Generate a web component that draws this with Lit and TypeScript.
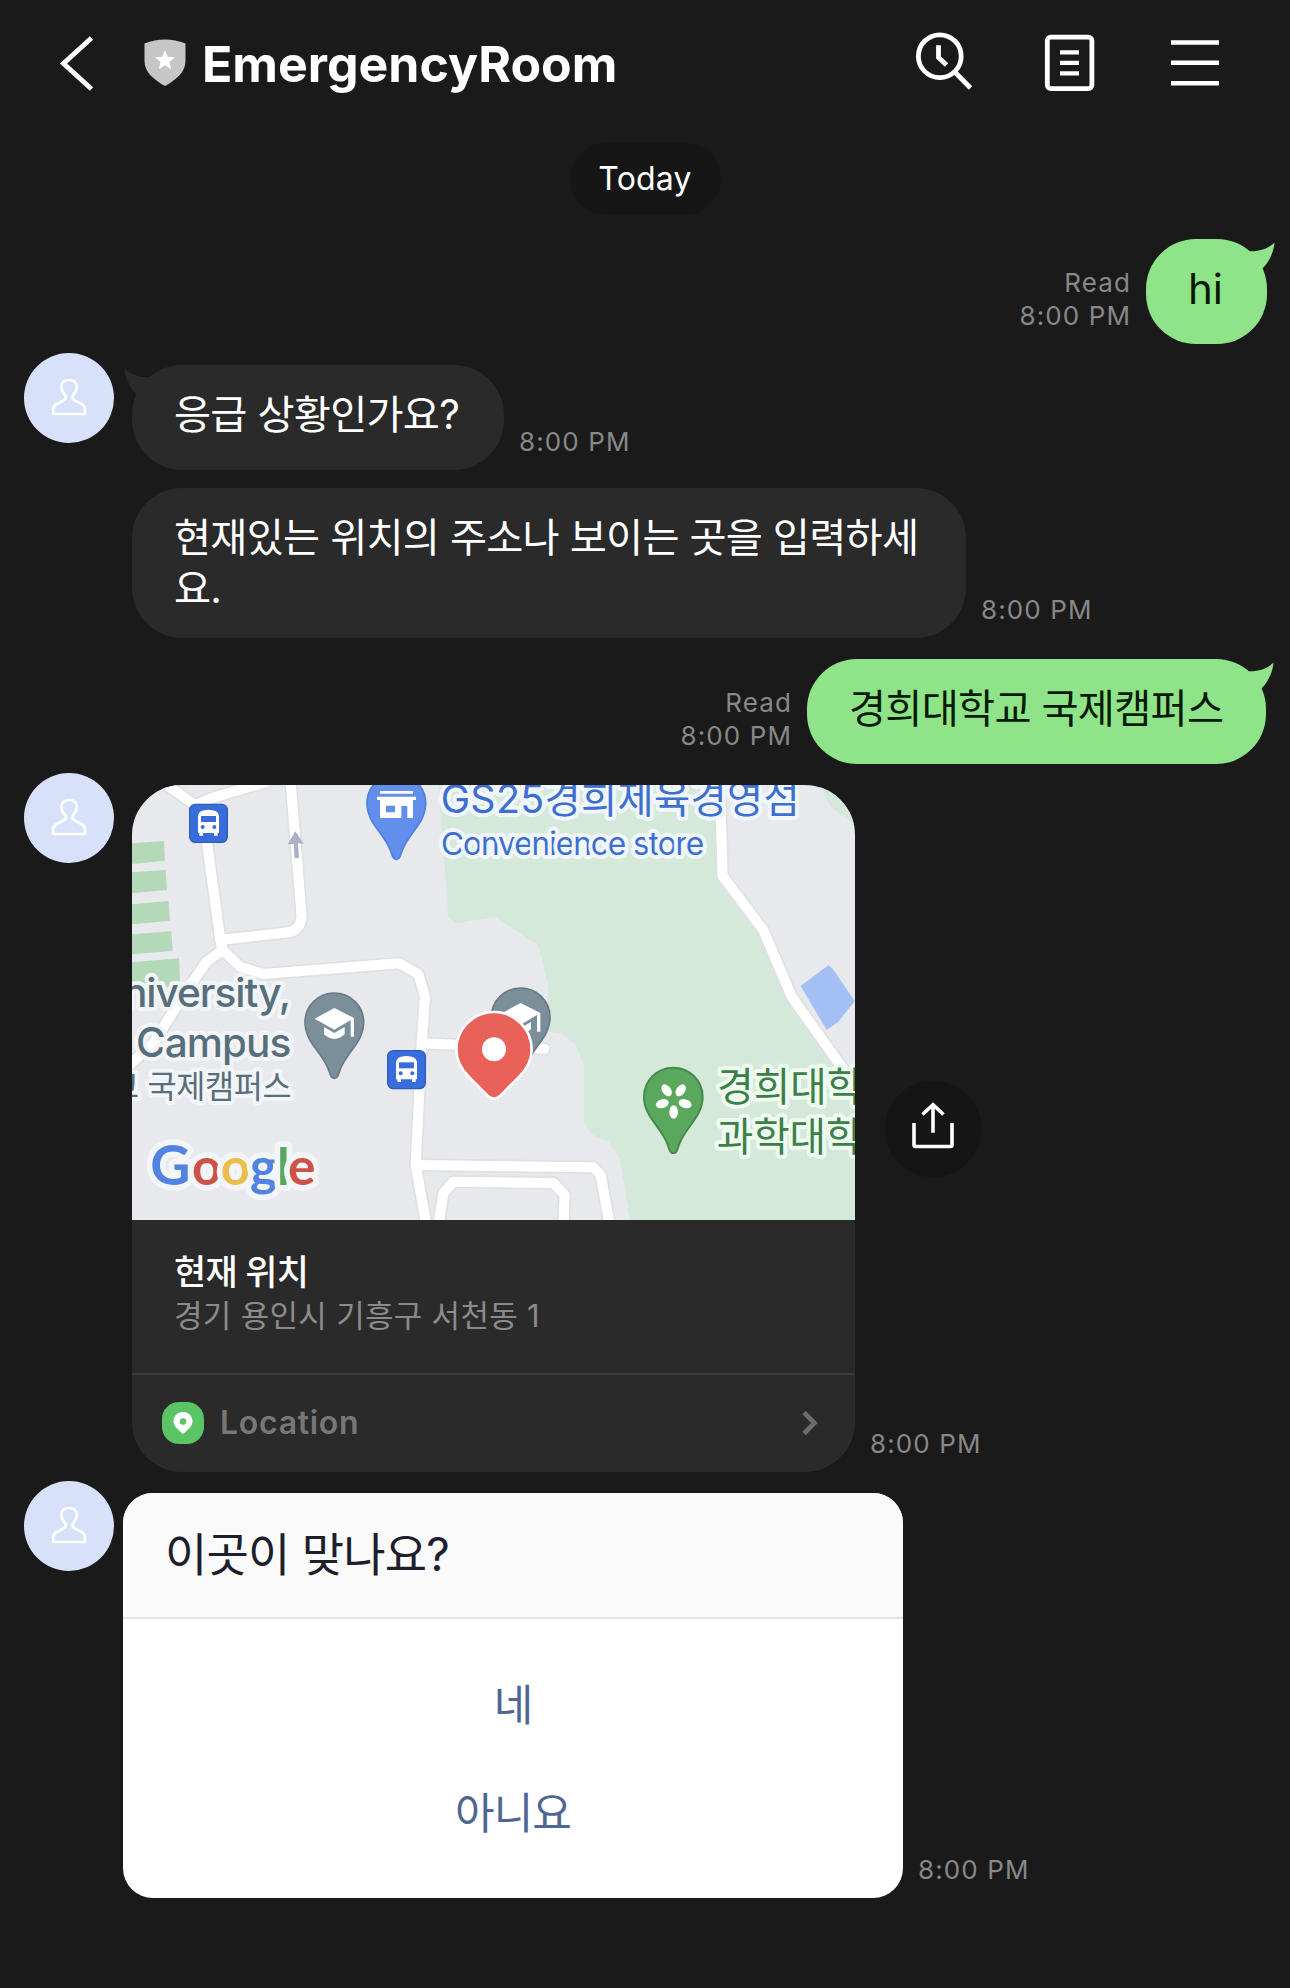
import { LitElement, html, css, svg, nothing } from "lit";
import { customElement, property } from "lit/decorators.js";

const FONT = css`Inter, "Noto Sans CJK KR", "Liberation Sans", sans-serif`;

@customElement("chat-header")
class ChatHeader extends LitElement {
  static styles = css`
    :host { display: block; }
    .bar { display: flex; align-items: center; height: 126px; padding: 0 66px 0 56px; box-sizing: border-box; }
    .back { width: 42px; height: 126px; }
    .shield { width: 44px; height: 126px; margin-left: 45px; }
    .title { margin: 0 0 0 15px; padding-top: 2px; flex: 1; font-family: ${FONT}; font-weight: 700; font-size: 50px; line-height: 124px; color: #fff; }
    .tools { width: 320px; height: 126px; }
  `;
  render() {
    return html`<header class="bar">
      <svg class="back" viewBox="56 0 42 126" fill="none" stroke="#fff" stroke-width="4.9"><path d="M91.5 38 L63.5 63.5 L91.5 89" /></svg>
      <svg class="shield" viewBox="143 0 44 126">
        <path d="M144.5 43.500 Q165 35.500 185.500 43.500 V61 C185.500 72 176 80 165 86 C154 80 144.500 72 144.500 61 Z" fill="#c6c6c6" />
        <path d="M165 50 L167.700 56.800 L175 57.300 L169.400 62 L171.200 69.200 L165 65.300 L158.800 69.200 L160.600 62 L155 57.300 L162.300 56.800 Z" fill="#fff" />
      </svg>
      <h1 class="title">EmergencyRoom</h1>
      <svg class="tools" viewBox="904 0 320 126" fill="none" stroke="#fff" stroke-width="4.800">
        <circle cx="939.800" cy="56.200" r="21.400" />
        <path d="M954.800 72 L970.500 88" />
        <path d="M938.500 45.300 V57.500 L946.500 65" />
        <rect x="1047.300" y="37.200" width="44.600" height="51.400" rx="3.500" />
        <path d="M1060 52.300 H1079 M1060 62.800 H1079 M1060 73.300 H1079" stroke-width="4.200" />
        <path d="M1171 42.400 H1219 M1171 62.800 H1219 M1171 83.200 H1219" stroke-width="4.500" />
      </svg>
    </header>`;
  }
}

@customElement("chat-avatar")
class ChatAvatar extends LitElement {
  static styles = css`
    :host { display: block; width: 90px; height: 90px; flex: none; }
    .disc { display: block; width: 90px; height: 90px; }
  `;
  render() {
    return html`<svg class="disc" viewBox="0 0 90 90">
      <circle cx="45" cy="45" r="45" fill="#d7e1fa" />
      <path d="M29.200 61 V56.500 C29.200 54 30.500 52.300 32.500 51.200 C38.500 47.800 42.300 46.800 42 43.800 C41.500 41 37.300 39.500 37.300 34 C37.300 29.500 40.500 27 45.100 27 C49.700 27 52.900 29.500 52.900 34 C52.900 39.500 48.700 41 48.200 43.800 C47.900 46.800 51.700 47.800 57.700 51.200 C59.700 52.300 61 54 61 56.500 V61 Z"
        fill="none" stroke="#fff" stroke-width="2.700" />
    </svg>`;
  }
}

@customElement("chat-bubble")
class ChatBubble extends LitElement {
  @property() side = "in";
  @property({ type: Boolean }) tail = false;
  static styles = css`
    :host { display: block; position: relative; flex: none; font-size: 40.3px; letter-spacing: -0.7px; }
    .text { box-sizing: border-box; padding: 24px 40px 30px 42px; border-radius: 50px; font-family: ${FONT};
      line-height: 51px; white-space: pre; height: 100%; }
    .in { background: #2a2a2a; color: #fff; }
    .out { background: #8fe48a; color: #061a06; }
    .tail { position: absolute; top: 2px; width: 30px; height: 32px; }
    .tail-in { left: -8px; }
    .tail-out { right: -8px; }
  `;
  render() {
    const left = this.side === "in";
    return html`<div class="text ${this.side}"><slot></slot></div>
      ${this.tail
        ? html`<svg class="tail tail-${this.side}" viewBox="0 0 30 32">
            ${left
              ? svg`<path d="M0.500 1.500 C7 8 17 11 27.500 10 L29 22 L13 28 C5 20 1.500 11 0.500 1.500 Z" fill="#2a2a2a" />`
              : svg`<path d="M29.500 1.500 C23 8 13 11 2.500 10 L1 22 L17 28 C25 20 28.500 11 29.500 1.500 Z" fill="#8fe48a" />`}
          </svg>`
        : nothing}`;
  }
}

const PIN = "M0 -88 C49 -88 88 -49 88 0 C88 57 41 86 19 138 C11 158 11 168 0 168 C-11 168 -11 158 -19 138 C-41 86 -88 57 -88 0 C-88 -49 -49 -88 0 -88 Z";

const ROADS = [
  "M130 38 L225 105 L275 84 L440 36",
  "M245 100 L301 510 L308 540",
  "M512 36 L545 440 Q540 482 505 487 L300 510",
  "M308 540 L360 590 L430 612 L838 580 L895 612 L915 680 L905 820 L887 1185 L920 1370",
  "M308 540 L260 575 L215 640 L150 740 L100 820 L20 892",
  "M905 820 L1273 836",
  "M890 1185 L1420 1192 L1442 1215 L1470 1370",
  "M955 1370 L970 1270 L1000 1235 L1300 1239 L1334 1275 L1330 1370",
  "M1799 36 L1808 318 L1930 480 L2015 680 L2250 1010",
];

@customElement("location-map")
class LocationMap extends LitElement {
  static styles = css`
    :host { display: block; }
    .map { display: block; width: 723px; height: 435px; }
    text { font-family: ${FONT}; paint-order: stroke; stroke-width: 24px; stroke-linejoin: round; }
    .shop { fill: #3c6fd0; stroke: #f0f6fb; }
    .campus { fill: #586e7a; stroke: #f2f5f8; }
    .park { fill: #3d7f49; stroke: #eefaf0; }
    .brand { font-family: Lato, sans-serif; font-weight: 700; font-size: 154px; stroke: #f3f6f9; stroke-width: 34px; }
    .cap { font-size: 166px; }
    .blue { fill: #5383e0; } .red { fill: #ce5245; } .gold { fill: #ecbd4b; } .leaf { fill: #5aa75f; }
  `;
  bus(x: number, y: number) {
    return svg`<g transform="translate(${x} ${y})">
      <rect x="2" y="2" width="113" height="114" rx="17" fill="#386ddb" stroke="#2d5cc0" stroke-width="4" />
      <path d="M27 36 Q29 18 58 18 Q88 18 90 36 V88 H86 V96 H75 V88 H42 V96 H31 V88 H27 Z" fill="#fff" />
      <rect x="36" y="37" width="45" height="18" fill="#386ddb" />
      <circle cx="41" cy="70" r="6" fill="#386ddb" /><circle cx="76" cy="70" r="6" fill="#386ddb" />
    </g>`;
  }
  school(x: number, y: number) {
    return svg`<g transform="translate(${x} ${y})">
      <path d="${PIN}" fill="#7b8f9a" stroke="#667a86" stroke-width="5" />
      <path d="M0 -43 L59 -13 V43 H49 V-7 L0 22 L-59 -11 Z" fill="#fff" />
      <path d="M-31 14 L0 32 L31 14 V36 Q15 50 0 50 Q-15 50 -31 36 Z" fill="#fff" />
    </g>`;
  }
  render() {
    return html`<svg class="map" viewBox="36 45 2169 1305">
      <rect x="36" y="45" width="2169" height="1305" fill="#e8e9ed" />
      <path d="M955 45 L975 300 L985 440 L1008 460 L1125 441 L1255 525 L1283 640 L1286 785 L1325 790 L1368 825 L1392 885 V1055 L1415 1093 L1465 1115 L1500 1168 L1530 1350 H2205 V945 L2015 680 L1930 480 L1808 318 L1799 45 Z" fill="#d4e9d9" />
      <path d="M2098 45 L2130 108 L2205 165 V45 Z" fill="#d4e9d9" />
      <path d="M36 220 L132 213 L135 272 L36 282 Z M36 307 L137 300 L141 360 L36 370 Z M36 403 L146 393 L150 452 L36 463 Z M36 493 L154 484 L158 543 L36 553 Z M36 577 L177 565 L181 650 L36 660 Z" fill="#b3d9b9" />
      <path d="M2042 648 L2125 586 L2138 596 L2204 693 L2155 755 L2120 780 Z" fill="#a3bff3" />
      <g fill="none" stroke="#dfe0e4" stroke-width="40" stroke-linejoin="round" stroke-linecap="round">${ROADS.map((d) => svg`<path d="${d}" />`)}</g>
      <g fill="none" stroke="#fff" stroke-width="30" stroke-linejoin="round" stroke-linecap="round">${ROADS.map((d) => svg`<path d="${d}" />`)}</g>
      <path d="M526 184 L551 221 L534 220 L537 264 L524 264 L521 222 L503 223 Z" fill="#acafc8" />
      ${this.bus(207, 101)} ${this.bus(801, 840)}
      <g transform="translate(829 100)">
        <path d="${PIN}" fill="#628eec" stroke="#4f7fe0" stroke-width="5" />
        <path d="M-49 -37 H50 V-29 H-49 Z M-58 -20 H59 V-10 H50 V44 H33 V8 H15 V44 H-49 V-10 H-58 Z M-31 7 V27 H-4 V7 Z" fill="#fff" fill-rule="evenodd" />
      </g>
      ${this.school(643, 757)} ${this.school(1202, 742)}
      <g transform="translate(1660 981)">
        <path d="${PIN}" fill="#59a85e" stroke="#458a4b" stroke-width="6" />
        ${[36, 108, 180, 252, 324].map((a) => svg`<ellipse cx="0" cy="-36" rx="13" ry="20" fill="#fff" transform="translate(1 9) rotate(${a})" />`)}
      </g>
      <path transform="translate(1122 840)" d="M0 -114 C63 -114 113 -63 113 0 C113 36 95 61 75 81 L17 139 Q0 153 -17 139 L-75 81 C-95 61 -113 36 -113 0 C-113 -63 -63 -114 0 -114 Z" fill="#e96259" stroke="#fff" stroke-width="8" />
      <circle cx="1122" cy="838" r="36" fill="#fff" />
      <text class="shop" x="962" y="129" font-size="118" textLength="1077">GS25경희제육경영섬</text>
      <text class="shop" x="963" y="254" font-size="95" textLength="790">Convenience store</text>
      <text class="campus" x="510" y="710" font-size="122" font-weight="500" text-anchor="end" letter-spacing="-3.2">niversity,</text>
      <text class="campus" x="48" y="860" font-size="122" font-weight="500" textLength="466">Campus</text>
      <text class="campus" x="514" y="984" font-size="95" text-anchor="end" letter-spacing="-1">교 국제캠퍼스</text>
      <text class="park" x="1792" y="993" font-size="119">경희대학</text>
      <text class="park" x="1790" y="1143" font-size="119">과학대학</text>
      <text class="brand" y="1246"><tspan class="blue cap" x="91">G</tspan><tspan class="red" x="216">o</tspan><tspan class="gold" x="302">o</tspan><tspan class="blue" x="390">g</tspan><tspan class="leaf" x="471">l</tspan><tspan class="red" x="504">e</tspan></text>
    </svg>`;
  }
}

@customElement("location-card")
class LocationCard extends LitElement {
  static styles = css`
    :host { display: block; width: 723px; height: 687px; flex: none; border-radius: 50px; overflow: hidden; background: #2a2a2a; font-family: ${FONT}; }
    .info { height: 155px; box-sizing: border-box; padding: 29px 42px 0 42px; border-bottom: 2px solid #3a3a3a; }
    .name { margin: 0; font-size: 35px; line-height: 46px; font-weight: 500; color: #fff; letter-spacing: -0.8px; }
    .addr { margin: 0; font-size: 31px; line-height: 42px; color: #8b8b8b; letter-spacing: 0.3px; }
    .foot { display: flex; align-items: center; height: 96px; padding: 0 37px 0 30px; }
    .badge { width: 42px; height: 42px; }
    .label { flex: 1; margin-left: 16px; font-size: 32px; line-height: 40px; font-weight: 600; color: #777; letter-spacing: 0.7px; }
    .go { width: 16px; height: 26px; }
  `;
  render() {
    return html`<location-map></location-map>
      <div class="info"><p class="name">현재 위치</p><p class="addr">경기 용인시 기흥구 서천동 1</p></div>
      <div class="foot">
        <svg class="badge" viewBox="0 0 42 42">
          <rect width="42" height="42" rx="17" fill="#5bc465" />
          <path d="M21 10 C26.500 10 30.500 14 30.500 19 C30.500 24.500 26 27.500 21 32 C16 27.500 11.500 24.500 11.500 19 C11.500 14 15.500 10 21 10 Z" fill="#fff" />
          <circle cx="21" cy="19.500" r="3.200" fill="#5bc465" />
        </svg>
        <span class="label">Location</span>
        <svg class="go" viewBox="0 0 16 26" fill="none" stroke="#6c6c6c" stroke-width="4.600"><path d="M2 2.500 L12.500 13 L2 23.500" /></svg>
      </div>`;
  }
}

@customElement("confirm-card")
class ConfirmCard extends LitElement {
  @property({ attribute: false }) options: string[] = [];
  static styles = css`
    :host { display: block; width: 780px; height: 405px; flex: none; border-radius: 30px; overflow: hidden; background: #fff; font-family: ${FONT}; }
    .question { box-sizing: border-box; height: 126px; padding: 0 42px; background: #fafafa; border-bottom: 2px solid #e4e4e6; font-size: 46px; line-height: 123px; letter-spacing: -0.8px; color: #1b202c; }
    .options { display: flex; flex-direction: column; align-items: center; padding-top: 32px; }
    .option { font-size: 43px; line-height: 108px; letter-spacing: -0.9px; color: #4e6690; }
  `;
  render() {
    return html`<div class="question">이곳이 맞나요?</div>
      <div class="options">${this.options.map((o) => html`<div class="option">${o}</div>`)}</div>`;
  }
}

@customElement("app-root")
class AppRoot extends LitElement {
  static styles = css`
    :host { display: block; width: 1290px; height: 1988px; overflow: hidden; background: #1a1a1a; font-family: ${FONT}; }
    .thread { display: flex; flex-direction: column; padding-top: 17px; }
    .day { align-self: center; width: 151px; height: 72px; border-radius: 36px; background: #161616; color: #fff; font-size: 32px; line-height: 71px; text-align: center; letter-spacing: 0.2px; }
    .row { display: flex; align-items: flex-end; }
    .sent { justify-content: flex-end; padding-right: 23px; margin-top: 21px; gap: 15px; }
    .first { margin-top: 24px; }
    .received { padding-left: 24px; margin-top: 9px; }
    .next { padding-left: 132px; margin-top: 18px; }
    .face { align-self: flex-start; }
    .body { margin: 12px 0 0 18px; }
    .wide { margin-left: 9px; }
    .meta { margin-bottom: 12px; font-size: 26px; line-height: 33px; color: #888; letter-spacing: 1.1px; text-align: right; }
    .stamp { margin-left: 15px; }
    .hi { width: 121px; height: 105px; font-size: 42px; letter-spacing: 0; }
    .ask { width: 372px; height: 105px; }
    .where { width: 834px; height: 150px; }
    .campus { width: 459px; height: 105px; margin-right: 1px; }
    .aside { display: flex; flex-direction: column; align-items: flex-start; justify-content: flex-end; }
    .share { width: 98px; height: 98px; margin: 0 0 249px 29px; }
  `;
  render() {
    return html`<chat-header></chat-header>
      <main class="thread">
        <div class="day">Today</div>
        <div class="row sent first">
          <div class="meta">Read<br />8:00 PM</div>
          <chat-bubble class="hi" side="out" tail>hi</chat-bubble>
        </div>
        <div class="row received">
          <chat-avatar class="face"></chat-avatar>
          <chat-bubble class="body ask" side="in" tail>응급 상황인가요?</chat-bubble>
          <div class="meta stamp">8:00 PM</div>
        </div>
        <div class="row next">
          <chat-bubble class="where" side="in">현재있는 위치의 주소나 보이는 곳을 입력하세<br />요.</chat-bubble>
          <div class="meta stamp">8:00 PM</div>
        </div>
        <div class="row sent">
          <div class="meta">Read<br />8:00 PM</div>
          <chat-bubble class="campus" side="out" tail>경희대학교 국제캠퍼스</chat-bubble>
        </div>
        <div class="row received">
          <chat-avatar class="face"></chat-avatar>
          <location-card class="body"></location-card>
          <div class="aside">
            <svg class="share" viewBox="884 1080 98 98" fill="none" stroke="#fff" stroke-width="3.600">
              <circle cx="933.200" cy="1129" r="48.300" fill="#151515" stroke="none" />
              <path d="M914 1123 V1145 Q914 1146.500 915.500 1146.500 H950.500 Q952 1146.500 952 1145 V1123 M933 1132.700 V1105 M922.500 1114.500 L933 1104.800 L943.500 1114.500" />
            </svg>
            <div class="meta stamp">8:00 PM</div>
          </div>
        </div>
        <div class="row received">
          <chat-avatar class="face"></chat-avatar>
          <confirm-card class="body wide" .options=${["네", "아니요"]}></confirm-card>
          <div class="meta stamp">8:00 PM</div>
        </div>
      </main>`;
  }
}
